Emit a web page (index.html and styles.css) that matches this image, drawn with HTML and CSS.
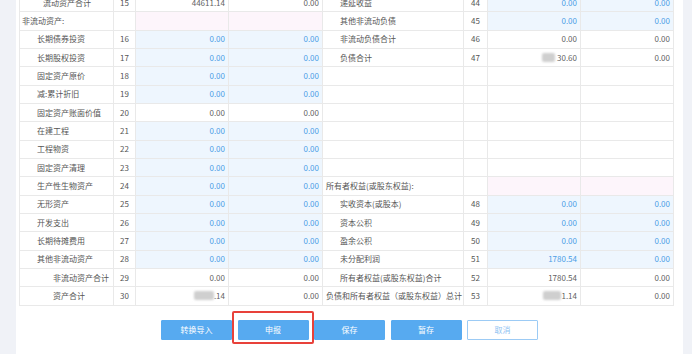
FILE: index.html
```html
<!DOCTYPE html>
<html lang="zh-CN">
<head>
<meta charset="utf-8">
<title>资产负债表</title>
<link rel="stylesheet" href="styles.css">
</head>
<body>
<div class="panel">
  <table class="sheet">
    <colgroup>
      <col class="c-label"><col class="c-no"><col class="c-v1"><col class="c-v2">
      <col class="c-label2"><col class="c-no2"><col class="c-v3"><col class="c-v4">
    </colgroup>
    <tbody>
      <tr>
        <td class="lbl in2">流动资产合计</td><td class="no">15</td><td class="num">44611.14</td><td class="num">0.00</td>
        <td class="lbl in1">递延收益</td><td class="no">44</td><td class="num ed">0.00</td><td class="num ed">0.00</td>
      </tr>
      <tr>
        <td class="lbl in0">非流动资产:</td><td class="no"></td><td class="hd"></td><td class="hd"></td>
        <td class="lbl in1">其他非流动负债</td><td class="no">45</td><td class="num ed">0.00</td><td class="num ed">0.00</td>
      </tr>
      <tr>
        <td class="lbl in1">长期债券投资</td><td class="no">16</td><td class="num ed">0.00</td><td class="num ed">0.00</td>
        <td class="lbl in1">非流动负债合计</td><td class="no">46</td><td class="num">0.00</td><td class="num">0.00</td>
      </tr>
      <tr>
        <td class="lbl in1">长期股权投资</td><td class="no">17</td><td class="num ed">0.00</td><td class="num ed">0.00</td>
        <td class="lbl in1">负债合计</td><td class="no">47</td><td class="num"><span class="blur b13"></span>30.60</td><td class="num">0.00</td>
      </tr>
      <tr>
        <td class="lbl in1">固定资产原价</td><td class="no">18</td><td class="num ed">0.00</td><td class="num ed">0.00</td>
        <td></td><td></td><td></td><td></td>
      </tr>
      <tr>
        <td class="lbl in1">减:累计折旧</td><td class="no">19</td><td class="num ed">0.00</td><td class="num ed">0.00</td>
        <td></td><td></td><td></td><td></td>
      </tr>
      <tr>
        <td class="lbl in1">固定资产账面价值</td><td class="no">20</td><td class="num">0.00</td><td class="num">0.00</td>
        <td></td><td></td><td></td><td></td>
      </tr>
      <tr>
        <td class="lbl in1">在建工程</td><td class="no">21</td><td class="num ed">0.00</td><td class="num ed">0.00</td>
        <td></td><td></td><td></td><td></td>
      </tr>
      <tr>
        <td class="lbl in1">工程物资</td><td class="no">22</td><td class="num ed">0.00</td><td class="num ed">0.00</td>
        <td></td><td></td><td></td><td></td>
      </tr>
      <tr>
        <td class="lbl in1">固定资产清理</td><td class="no">23</td><td class="num ed">0.00</td><td class="num ed">0.00</td>
        <td></td><td></td><td></td><td></td>
      </tr>
      <tr>
        <td class="lbl in1">生产性生物资产</td><td class="no">24</td><td class="num ed">0.00</td><td class="num ed">0.00</td>
        <td class="lbl in0r">所有者权益(或股东权益):</td><td class="no"></td><td class="hd"></td><td class="hd"></td>
      </tr>
      <tr>
        <td class="lbl in1">无形资产</td><td class="no">25</td><td class="num ed">0.00</td><td class="num ed">0.00</td>
        <td class="lbl in1">实收资本(或股本)</td><td class="no">48</td><td class="num ed">0.00</td><td class="num ed">0.00</td>
      </tr>
      <tr>
        <td class="lbl in1">开发支出</td><td class="no">26</td><td class="num ed">0.00</td><td class="num ed">0.00</td>
        <td class="lbl in1">资本公积</td><td class="no">49</td><td class="num ed">0.00</td><td class="num ed">0.00</td>
      </tr>
      <tr>
        <td class="lbl in1">长期待摊费用</td><td class="no">27</td><td class="num ed">0.00</td><td class="num ed">0.00</td>
        <td class="lbl in1">盈余公积</td><td class="no">50</td><td class="num ed">0.00</td><td class="num ed">0.00</td>
      </tr>
      <tr>
        <td class="lbl in1">其他非流动资产</td><td class="no">28</td><td class="num ed">0.00</td><td class="num ed">0.00</td>
        <td class="lbl in1">未分配利润</td><td class="no">51</td><td class="num ed">1780.54</td><td class="num ed">0.00</td>
      </tr>
      <tr>
        <td class="lbl in3">非流动资产合计</td><td class="no">29</td><td class="num">0.00</td><td class="num">0.00</td>
        <td class="lbl in1">所有者权益(或股东权益)合计</td><td class="no">52</td><td class="num">1780.54</td><td class="num">0.00</td>
      </tr>
      <tr>
        <td class="lbl in3">资产合计</td><td class="no">30</td><td class="num"><span class="blur b20"></span>.14</td><td class="num">0.00</td>
        <td class="lbl in0r">负债和所有者权益（或股东权益）总计</td><td class="no">53</td><td class="num"><span class="blur b18"></span>1.14</td><td class="num">0.00</td>
      </tr>
    </tbody>
  </table>
  <div class="actions">
    <button class="btn" type="button">转换导入</button>
    <button class="btn marked" type="button">申报</button>
    <button class="btn" type="button">保存</button>
    <button class="btn" type="button">暂存</button>
    <button class="btn ghost" type="button">取消</button>
  </div>
</div>
</body>
</html>
```

FILE: styles.css
```css
html, body {
  margin: 0;
  padding: 0;
  height: 100%;
  overflow: hidden;
}
body {
  background: #f0f2f7;
  font-family: "Noto Sans CJK SC", "Noto Sans", sans-serif;
  font-size: 8px;
  color: #555;
}
.panel {
  margin-left: 16px;
  width: 664px;
  padding-left: 3px;
  height: 100%;
  background: #fff;
  overflow: hidden;
}
.sheet {
  margin-top: -7px;
  border-collapse: collapse;
  table-layout: fixed;
  width: 654px;
}
.c-label { width: 94px; }
.c-no { width: 22px; }
.c-v1 { width: 93px; }
.c-v2 { width: 94px; }
.c-label2 { width: 141px; }
.c-no2 { width: 24px; }
.c-v3 { width: 93px; }
.c-v4 { width: 93px; }
.sheet td {
  height: 17.33px;
  padding: 0;
  border: 1px solid #e9e9e9;
  line-height: 10px;
  white-space: nowrap;
  overflow: hidden;
  background: #fff;
}
.lbl { text-align: left; }
.in0 { padding-left: 2px !important; }
.in0r { padding-left: 3px !important; }
.in1 { padding-left: 17px !important; }
.in2 { padding-left: 23px !important; }
.in3 { padding-left: 33px !important; }
.no { text-align: center; }
.num {
  text-align: right;
  padding-right: 3px !important;
  color: #5f5f5f;
}
.sheet td.ed {
  background: #eef6fe;
  color: #4a9de6;
}
.sheet td.hd {
  background: #fdf5fb;
}
.blur {
  display: inline-block;
  height: 9px;
  vertical-align: -1px;
  background: #cfcfcf;
  border-radius: 2px;
  filter: blur(1.2px);
}
.b13 { width: 13px; margin-right: 2px; }
.b20 { width: 20px; }
.b18 { width: 18px; }
.actions {
  display: flex;
  justify-content: center;
  gap: 5.5px;
  margin-top: 14px;
  padding-right: 3px;
}
.btn {
  position: relative;
  width: 71px;
  height: 20px;
  border: 1px solid #57aaf0;
  background: #57aaf0;
  color: #fff;
  font-family: "Noto Sans CJK SC", "Noto Sans", sans-serif;
  font-size: 8px;
  padding: 0;
  border-radius: 1px;
}
.btn.ghost {
  background: #fff;
  border-color: #9ccbf5;
  color: #8fc3f2;
}
.btn.marked::after {
  content: "";
  position: absolute;
  left: -7px;
  right: -6px;
  top: -10px;
  bottom: -5px;
  border: 2px solid #e8413a;
  border-radius: 2px;
}
```
